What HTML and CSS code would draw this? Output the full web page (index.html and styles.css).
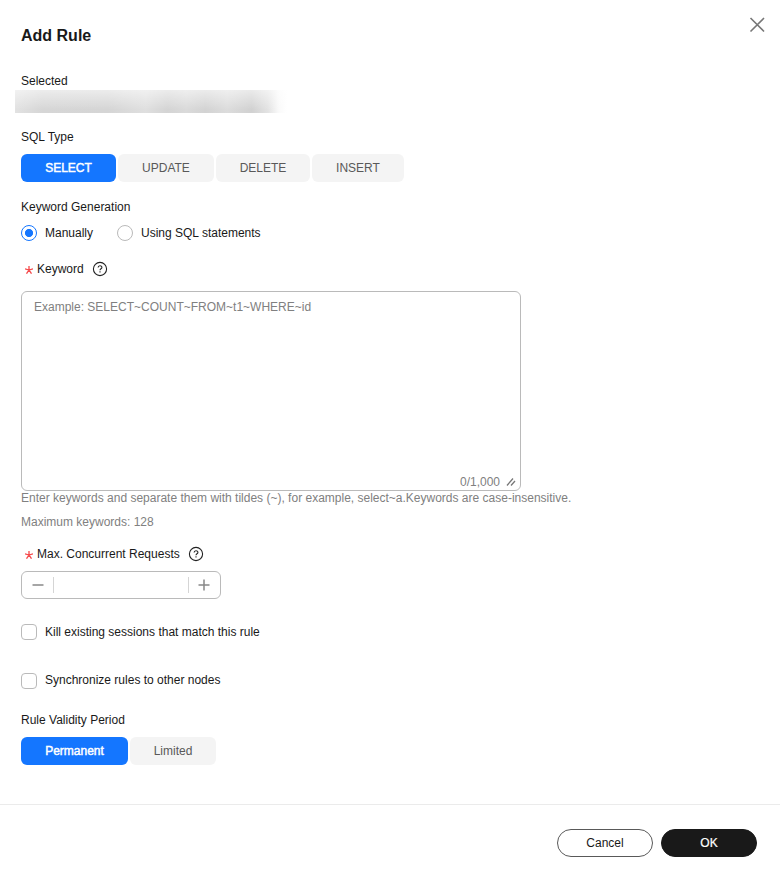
FILE: index.html
```html
<!DOCTYPE html>
<html lang="en">
<head>
<meta charset="utf-8">
<title>Add Rule</title>
<link rel="stylesheet" href="styles.css">
</head>
<body>
<div class="dialog">
  <header class="header">
    <h1 class="title">Add Rule</h1>
    <svg class="close" width="16" height="16" viewBox="0 0 16 16"><path d="M1.5 1l13.5 13.5M15 1L1.5 14.5"/></svg>
  </header>
  <main class="form">
    <div class="label">Selected</div>
    <div class="redacted"></div>
    <div class="label sql-label">SQL Type</div>
    <div class="segments">
      <div class="segment active seg-select">SELECT</div>
      <div class="segment seg-update">UPDATE</div>
      <div class="segment seg-delete">DELETE</div>
      <div class="segment seg-insert">INSERT</div>
    </div>
    <div class="label generation">Keyword Generation</div>
    <div class="radios">
      <div class="option manual"><span class="radio checked"></span>Manually</div>
      <div class="option"><span class="radio"></span>Using SQL statements</div>
    </div>
    <div class="label required keyword">
      <svg class="star" width="8" height="8" viewBox="0 0 8 8"><path d="M4 0v4M0 2.8l4 1.2M8 2.8L4 4M1.5 7.7L4 4M6.5 7.7L4 4"/></svg>
      <span>Keyword</span>
      <svg class="help" width="16" height="16" viewBox="0 0 16 16"><circle cx="8" cy="8" r="6.6"/><path d="M6.1 6.6C6.1 4.1 9.9 4.1 9.9 6.4C9.9 7.8 8 7.7 8 9.2M8 10.3v1.2"/></svg>
    </div>
    <div class="textarea">
      <div class="placeholder">Example: SELECT~COUNT~FROM~t1~WHERE~id</div>
      <div class="counter">0/1,000<svg class="grip" width="10" height="10" viewBox="0 0 10 10"><path d="M1 8.5L7 1.5M5 8.5L9 4"/></svg></div>
    </div>
    <div class="hint">Enter keywords and separate them with tildes (~), for example, select~a.Keywords are case-insensitive.</div>
    <div class="hint maximum">Maximum keywords: 128</div>
    <div class="label required requests">
      <svg class="star" width="8" height="8" viewBox="0 0 8 8"><path d="M4 0v4M0 2.8l4 1.2M8 2.8L4 4M1.5 7.7L4 4M6.5 7.7L4 4"/></svg>
      <span>Max. Concurrent Requests</span>
      <svg class="help" width="16" height="16" viewBox="0 0 16 16"><circle cx="8" cy="8" r="6.6"/><path d="M6.1 6.6C6.1 4.1 9.9 4.1 9.9 6.4C9.9 7.8 8 7.7 8 9.2M8 10.3v1.2"/></svg>
    </div>
    <div class="stepper">
      <span class="step"><svg width="12" height="12" viewBox="0 0 12 12"><path d="M.5 6h11"/></svg></span>
      <span class="value"></span>
      <span class="step plus"><svg width="12" height="12" viewBox="0 0 12 12"><path d="M.5 6h11M6 .5v11"/></svg></span>
    </div>
    <div class="option kill"><span class="checkbox"></span>Kill existing sessions that match this rule</div>
    <div class="option sync"><span class="checkbox"></span>Synchronize rules to other nodes</div>
    <div class="label validity">Rule Validity Period</div>
    <div class="segments">
      <div class="segment active seg-permanent">Permanent</div>
      <div class="segment seg-limited">Limited</div>
    </div>
  </main>
  <footer class="footer">
    <div class="button">Cancel</div>
    <div class="button primary">OK</div>
  </footer>
</div>
</body>
</html>
```
FILE: styles.css
```css
* { box-sizing: border-box; }
body {
  margin: 0;
  background: #fff;
  color: #191919;
  font: 12px/16px "Liberation Sans", Arial, sans-serif;
}
svg { display: block; flex: none; fill: none; }
.dialog { display: flex; flex-direction: column; height: 873px; }
.header {
  display: flex;
  justify-content: space-between;
  align-items: flex-start;
  height: 73px;
  padding: 17px 15px 0 21px;
}
.title { margin: 9px 0 0; font-size: 16px; line-height: 20px; font-weight: 700; }
.close { stroke: #777; stroke-width: 1.6; }
.form { flex: 1; padding: 0 21px; }
.label { height: 16px; }
.redacted {
  width: 272px;
  height: 23px;
  margin: 1px 0 0 -6px;
  background:
    linear-gradient(180deg, rgba(255,255,255,.55), rgba(255,255,255,0) 85%),
    linear-gradient(90deg, #e2e2e2 0, #d6d6d6 10%, #d5d5d5 34%, #dfdfdf 48%, #d4d4d4 56%, #dadada 63%, #d3d3d3 70%, #dcdcdc 78%, #d1d1d1 87%, #e3e3e3 93%, #fafafa 97%, #fff 100%);
}
.sql-label { margin-top: 16px; }
.segments { display: flex; gap: 2px; margin-top: 9px; }
.segment {
  height: 28px;
  border-radius: 6px;
  background: #f4f4f4;
  color: #595959;
  line-height: 28px;
  text-align: center;
}
.segment.active { background: #1476ff; color: #fff; -webkit-text-stroke: .45px #fff; }
.seg-select { width: 95px; }
.seg-update { width: 96px; }
.seg-delete { width: 94px; }
.seg-insert { width: 92px; }
.seg-permanent { width: 107px; }
.seg-limited { width: 86px; }
.generation { margin-top: 17px; }
.radios { display: flex; margin-top: 10px; }
.option { display: flex; align-items: center; gap: 8px; height: 16px; }
.manual { width: 96px; }
.radio, .checkbox { flex: none; width: 16px; height: 16px; border: 1px solid #bababa; border-radius: 50%; }
.radio.checked { border-color: #1476ff; background: radial-gradient(circle, #1476ff 3.7px, #fff 4.4px); }
.checkbox { border-radius: 4px; }
.required { display: flex; align-items: center; padding-left: 4px; }
.star { margin: 1px 4px 0 0; stroke: #f5484a; stroke-width: 1.3; }
.help { margin-left: 8px; stroke: #222; stroke-width: 1.1; }
.keyword { margin-top: 20px; }
.textarea {
  display: flex;
  flex-direction: column;
  justify-content: space-between;
  width: 500px;
  height: 200px;
  margin-top: 14px;
  padding: 7px 4px 0 12px;
  border: 1px solid #bababa;
  border-radius: 6px;
  color: #808080;
}
.counter { display: flex; justify-content: flex-end; align-items: center; gap: 6px; }
.grip { stroke: #777; stroke-width: 1.3; }
.hint { height: 16px; margin-top: -1px; color: #808080; }
.maximum { margin-top: 8px; }
.requests { margin-top: 16px; }
.stepper {
  display: flex;
  align-items: center;
  width: 200px;
  height: 28px;
  margin-top: 9px;
  border: 1px solid #bababa;
  border-radius: 6px;
}
.step { display: flex; justify-content: center; width: 31px; stroke: #888; stroke-width: 1.5; }
.plus { padding-right: 2px; }
.value { flex: 1; height: 16px; border: solid #d5d5d5; border-width: 0 1px; }
.kill { margin-top: 25px; }
.sync { margin-top: 32px; }
.sync .checkbox { margin-top: 2px; }
.validity { margin-top: 24px; }
.footer {
  display: flex;
  justify-content: flex-end;
  gap: 8px;
  height: 69px;
  padding: 24px 23px 0 0;
  border-top: 1px solid #ebebeb;
}
.button {
  width: 96px;
  height: 28px;
  border: 1px solid #595959;
  border-radius: 14px;
  line-height: 26px;
  text-align: center;
}
.primary { border-color: #191919; background: #191919; color: #fff; -webkit-text-stroke: .2px #fff; }
```
